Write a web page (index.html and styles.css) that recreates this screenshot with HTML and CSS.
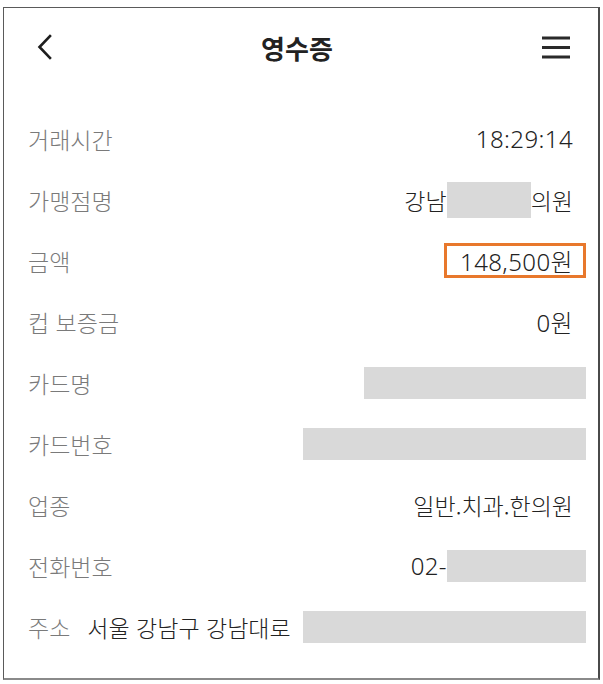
FILE: index.html
```html
<!DOCTYPE html>
<html lang="ko">
<head>
    <meta charset="UTF-8">
    <title>영수증</title>
    <link rel="stylesheet" href="styles.css">
</head>
<body>
<div class="receipt-frame">
    <div class="top-bar">
        <button class="icon-btn back-btn" aria-label="뒤로">
            <svg width="16" height="26" viewBox="0 0 16 26">
                <path d="M13 2 L2.5 13 L13 24" fill="none" stroke="#1e1e1e" stroke-width="2.6" stroke-linecap="square"/>
            </svg>
        </button>
        <h1 class="title">영수증</h1>
        <button class="icon-btn menu-btn" aria-label="메뉴">
            <svg width="30" height="24" viewBox="0 0 30 24">
                <rect x="1" y="1.5" width="28" height="3" fill="#2a2a2a"/>
                <rect x="1" y="11" width="28" height="3" fill="#2a2a2a"/>
                <rect x="1" y="20.5" width="28" height="3" fill="#2a2a2a"/>
            </svg>
        </button>
    </div>

    <div class="receipt-list">
        <div class="receipt-row">
            <span class="row-label">거래시간</span>
            <span class="row-value num">18:29:14</span>
        </div>
        <div class="receipt-row">
            <span class="row-label">가맹점명</span>
            <span class="row-value">강남<span class="masked masked-name"></span>의원</span>
        </div>
        <div class="receipt-row">
            <span class="row-label">금액</span>
            <span class="row-value amount-box num">148,500원</span>
        </div>
        <div class="receipt-row">
            <span class="row-label">컵 보증금</span>
            <span class="row-value num">0원</span>
        </div>
        <div class="receipt-row">
            <span class="row-label">카드명</span>
            <span class="masked masked-card"></span>
        </div>
        <div class="receipt-row">
            <span class="row-label">카드번호</span>
            <span class="masked masked-number"></span>
        </div>
        <div class="receipt-row">
            <span class="row-label">업종</span>
            <span class="row-value">일반.치과.한의원</span>
        </div>
        <div class="receipt-row">
            <span class="row-label">전화번호</span>
            <span class="row-value num tail-masked">02-<span class="masked masked-phone"></span></span>
        </div>
        <div class="receipt-row address-row">
            <span class="row-label">주소</span>
            <span class="address-text">서울 강남구 강남대로</span>
            <span class="masked masked-address"></span>
        </div>
    </div>
</div>
</body>
</html>
```

FILE: styles.css
```css
* {
    box-sizing: border-box;
}

body {
    margin: 0;
    background-color: #ffffff;
    font-family: "Noto Sans CJK KR", "Noto Sans", sans-serif;
    color: #222222;
}

.receipt-frame {
    margin: 7px 0 0 3px;
    width: 597px;
    height: 673px;
    border-style: solid;
    border-color: #5a5a5a #4a4a4a #8a8a8a #5a5a5a;
    border-width: 1px 2px 2px 1px;
    background-color: #ffffff;
}

.top-bar {
    display: flex;
    align-items: center;
    justify-content: space-between;
    height: 78px;
    padding: 0 27px 0 33px;
}

.icon-btn {
    display: flex;
    align-items: center;
    justify-content: center;
    padding: 0;
    border: none;
    background: none;
}

.title {
    margin: 0;
    font-size: 26px;
    font-weight: bold;
    color: #222222;
}

.receipt-list {
    padding-top: 22px;
}

.receipt-row {
    display: flex;
    align-items: center;
    justify-content: space-between;
    height: 61px;
    padding: 0 12px 0 24px;
    font-size: 23px;
    font-weight: 300;
}

.row-label {
    color: #7a7a7a;
    white-space: nowrap;
}

.row-value {
    display: flex;
    align-items: center;
    padding-right: 13px;
    color: #222222;
    white-space: nowrap;
}

.row-value.num {
    font-family: "Noto Sans", "Noto Sans CJK KR", sans-serif;
    font-size: 24px;
    letter-spacing: 0.4px;
}

.row-value.tail-masked {
    padding-right: 0;
}

.amount-box {
    height: 35px;
    padding: 0 10px 0 13px;
    border: 3px solid #e8782c;
}

.masked {
    display: inline-block;
    height: 32px;
    background-color: #d9d9d9;
}

.masked-name {
    width: 84px;
    height: 36px;
}

.masked-card {
    width: 222px;
}

.masked-number {
    width: 283px;
}

.masked-phone {
    width: 139px;
}

.address-row {
    justify-content: flex-start;
}

.address-text {
    margin-left: 17px;
    color: #222222;
    white-space: nowrap;
}

.masked-address {
    margin-left: auto;
    width: 283px;
}
```
